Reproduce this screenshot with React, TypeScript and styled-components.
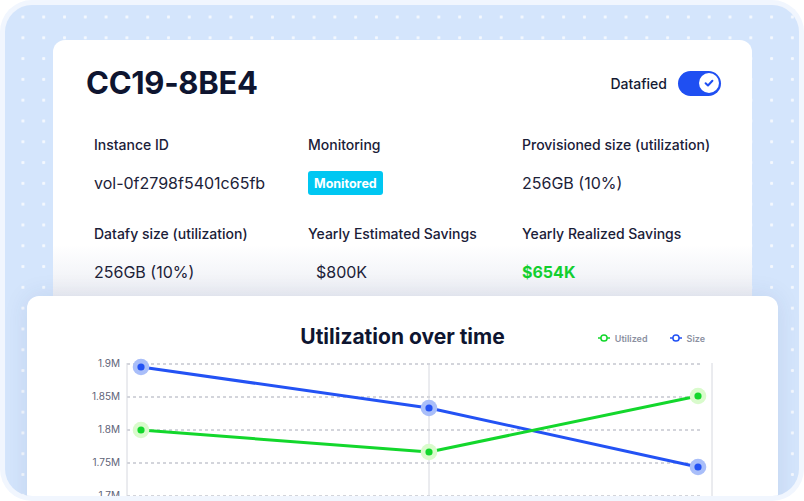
import React from "react"
import styled, { createGlobalStyle } from "styled-components"

const GlobalStyle = createGlobalStyle`
  html, body {
    margin: 0;
    padding: 0;
    background: #ffffff;
  }
  body {
    font-family: Inter, "Noto Sans", "Liberation Sans", sans-serif;
    color: #141a33;
  }
`

const Frame = styled.div`
  width: 804px;
  height: 501px;
  box-sizing: border-box;
  padding: 5px;
  background: #f1f6fe;
  border-radius: 32px;
  overflow: hidden;
`

const Panel = styled.div`
  height: 100%;
  box-sizing: border-box;
  padding-top: 35px;
  border-radius: 27px;
  overflow: hidden;
  display: flex;
  flex-direction: column;
  background-color: #d4e5fc;
  background-image: radial-gradient(
    circle,
    rgba(255, 255, 255, 0.75) 1.3px,
    transparent 1.8px
  );
  background-size: 20.8px 20.8px;
  background-position: 7.5px 1.6px;
`

const InfoCard = styled.section`
  flex-shrink: 0;
  height: 256px;
  box-sizing: border-box;
  margin: 0 47px 0 48px;
  padding: 27px 31px 0 33px;
  border-radius: 12px 12px 0 0;
  background: linear-gradient(
    180deg,
    #ffffff 0%,
    #ffffff 80%,
    #eceef4 100%
  );
`

const Header = styled.div`
  display: flex;
  align-items: center;
  justify-content: space-between;
`

const Title = styled.h1`
  margin: 0;
  font-size: 31px;
  line-height: 32px;
  font-weight: 700;
  letter-spacing: -0.3px;
  color: #0e1530;
`

const ToggleWrap = styled.label`
  display: flex;
  align-items: center;
  gap: 11px;
  font-size: 14px;
  font-weight: 500;
  color: #141a33;
`

const Track = styled.span<{ $on: boolean }>`
  width: 43px;
  height: 25px;
  box-sizing: border-box;
  padding: 2.5px;
  border-radius: 13px;
  background: ${p => (p.$on ? "#1f4ff2" : "#c5cad6")};
  display: flex;
  justify-content: ${p => (p.$on ? "flex-end" : "flex-start")};
`

const Knob = styled.span`
  width: 20px;
  height: 20px;
  border-radius: 50%;
  background: #ffffff;
  display: flex;
  align-items: center;
  justify-content: center;
`

const Fields = styled.div`
  margin: 36px 0 0 8px;
  display: grid;
  grid-template-columns: repeat(3, 214px);
  row-gap: 29px;
`

const Field = styled.div`
  display: flex;
  flex-direction: column;
  gap: 16px;
`

const Label = styled.div`
  font-size: 14px;
  line-height: 20px;
  font-weight: 500;
  color: #1a2038;
`

const Value = styled.div<{ $tone?: "green"; $indent?: boolean }>`
  height: 24px;
  display: flex;
  align-items: center;
  padding-left: ${p => (p.$indent ? "8px" : "0")};
  font-size: 16px;
  font-weight: ${p => (p.$tone === "green" ? 700 : 400)};
  color: ${p => (p.$tone === "green" ? "#12cf2e" : "#1c2238")};
`

const Badge = styled.span`
  display: inline-flex;
  align-items: center;
  height: 24px;
  padding: 0 6px;
  border-radius: 3px;
  background: #00c7f2;
  color: #ffffff;
  font-size: 12.5px;
  font-weight: 700;
`

const ChartCard = styled.section`
  flex-shrink: 0;
  height: 230px;
  box-sizing: border-box;
  margin: 0 21px 0 22px;
  padding-top: 27px;
  border-radius: 12px;
  background: #ffffff;
  box-shadow: 0 0 24px rgba(40, 60, 120, 0.1);
`

const ChartHeader = styled.div`
  display: grid;
  grid-template-columns: 1fr auto 1fr;
  align-items: center;
  padding: 0 73px;
`

const ChartTitle = styled.h2`
  grid-column: 2;
  margin: 0;
  font-size: 21px;
  line-height: 28px;
  font-weight: 700;
  color: #0e1530;
`

const Legend = styled.div`
  justify-self: end;
  display: flex;
  gap: 22px;
  padding-top: 2px;
`

const LegendItem = styled.span`
  display: flex;
  align-items: center;
  gap: 5px;
  font-size: 9px;
  font-weight: 600;
  color: #8b90a1;
`

const Plot = styled.svg`
  display: block;
  overflow: visible;
`

const BLUE = "#2352f4"
const GREEN = "#13d72c"

const LegendIcon = ({ color }: { color: string }) => (
  <svg width="12" height="10" viewBox="0 0 12 10">
    <line x1="0" y1="5" x2="12" y2="5" stroke={color} strokeWidth="1.5" />
    <circle cx="6" cy="5" r="3.1" fill="#fff" stroke={color} strokeWidth="1.5" />
  </svg>
)

const Check = () => (
  <svg width="12" height="12" viewBox="0 0 12 12">
    <path d="M2.6 6.2 L5 8.5 L9.4 3.8" fill="none" stroke="#1f4ff2" strokeWidth="2" strokeLinecap="round" strokeLinejoin="round" />
  </svg>
)

const ticks = [
  { label: "1.9M", y: 13 },
  { label: "1.85M", y: 46 },
  { label: "1.8M", y: 79 },
  { label: "1.75M", y: 112 },
  { label: "1.7M", y: 145 },
]

const series = [
  { color: BLUE, halo: "#a9bef9", points: [[114, 16], [402, 57], [671, 116]] },
  { color: GREEN, halo: "#d9fbcc", points: [[114, 79], [402, 101], [671, 45]] },
]

const fields = [
  { label: "Instance ID", value: <Value>vol-0f2798f5401c65fb</Value> },
  { label: "Monitoring", value: <Value><Badge>Monitored</Badge></Value> },
  { label: "Provisioned size (utilization)", value: <Value>256GB (10%)</Value> },
  { label: "Datafy size (utilization)", value: <Value>256GB (10%)</Value> },
  { label: "Yearly Estimated Savings", value: <Value $indent>$800K</Value> },
  { label: "Yearly Realized Savings", value: <Value $tone="green">$654K</Value> },
]

const UtilizationChart = () => (
  <Plot width="751" height="150" viewBox="0 0 751 150">
    {ticks.map(t => (
      <g key={t.label}>
        <line x1="100" y1={t.y} x2="674" y2={t.y} stroke="#a7aab7" strokeWidth="1" strokeDasharray="3 3" />
        <text x="93" y={t.y} textAnchor="end" dominantBaseline="middle" fontSize="10" fill="#5e6377" fontFamily="Inter, sans-serif">
          {t.label}
        </text>
      </g>
    ))}
    <line x1="100" y1="12" x2="100" y2="160" stroke="#d6d8df" strokeWidth="1" />
    <line x1="402" y1="12" x2="402" y2="160" stroke="#d6d8df" strokeWidth="1" />
    <line x1="685" y1="12" x2="685" y2="160" stroke="#d6d8df" strokeWidth="1" />
    {series.map(s => (
      <polyline
        key={s.color}
        points={s.points.map(p => p.join(",")).join(" ")}
        fill="none"
        stroke={s.color}
        strokeWidth="3"
        strokeLinejoin="round"
      />
    ))}
    {series.map(s =>
      s.points.map(([x, y]) => (
        <g key={`${s.color}-${x}`}>
          <circle cx={x} cy={y} r="8.3" fill={s.halo} />
          <circle cx={x} cy={y} r="3.6" fill={s.color} />
        </g>
      ))
    )}
  </Plot>
)

export default function App() {
  return (
    <>
      <GlobalStyle />
      <Frame>
        <Panel>
          <InfoCard>
            <Header>
              <Title>CC19-8BE4</Title>
              <ToggleWrap>
                Datafied
                <Track $on>
                  <Knob>
                    <Check />
                  </Knob>
                </Track>
              </ToggleWrap>
            </Header>
            <Fields>
              {fields.map(f => (
                <Field key={f.label}>
                  <Label>{f.label}</Label>
                  {f.value}
                </Field>
              ))}
            </Fields>
          </InfoCard>
          <ChartCard>
            <ChartHeader>
              <ChartTitle>Utilization over time</ChartTitle>
              <Legend>
                <LegendItem>
                  <LegendIcon color={GREEN} />
                  Utilized
                </LegendItem>
                <LegendItem>
                  <LegendIcon color={BLUE} />
                  Size
                </LegendItem>
              </Legend>
            </ChartHeader>
            <UtilizationChart />
          </ChartCard>
        </Panel>
      </Frame>
    </>
  )
}
